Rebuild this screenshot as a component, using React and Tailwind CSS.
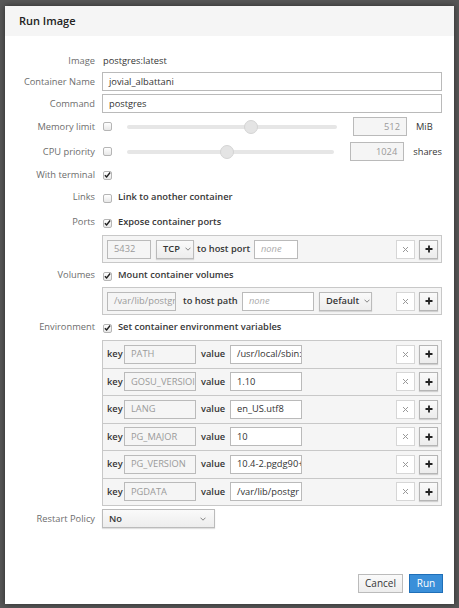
import React from 'react';

const Check = ({ checked }) => (
    <span className="w-[9px] h-[9px] shrink-0 border border-[#b5b5b5] rounded-[2px] bg-gradient-to-b from-white to-[#e8e8e8] flex items-center justify-center">
        {checked && (
            <svg width="8" height="8" viewBox="0 0 8 8">
                <path d="M1 4.2 L3 6.3 L7 1.2" stroke="#222" strokeWidth="1.6" fill="none" />
            </svg>
        )}
    </span>
);

const Row = ({ label, className = '', children }) => (
    <div className={`flex items-center ${className}`}>
        <div className="w-[90px] shrink-0 text-right text-[#6d6d6d] whitespace-nowrap">{label}</div>
        <div className="ml-[7px] w-[340px] flex items-center">{children}</div>
    </div>
);

const Field = ({ value, gray, italic, className = '' }) => (
    <div
        className={`h-[19px] shrink-0 border border-[#bababa] flex items-center px-[6px] overflow-hidden whitespace-nowrap ${
            gray ? 'bg-[#f5f5f5] text-[#9a9a9a]' : 'bg-white text-[#333]'
        } ${italic ? 'italic text-[#aaa]' : ''} ${className}`}
    >
        {value}
    </div>
);

const Chevron = () => (
    <svg className="shrink-0" width="6" height="4" viewBox="0 0 6 4">
        <path d="M0.5 0.7 L3 3.2 L5.5 0.7" stroke="#777" strokeWidth="0.9" fill="none" />
    </svg>
);

const Select = ({ value, className = '' }) => (
    <div className={`h-[19px] shrink-0 border border-[#bbb] bg-gradient-to-b from-[#fafafa] to-[#ededed] shadow-[0_1px_1px_rgba(0,0,0,0.12)] flex items-center gap-[5px] px-[6px] font-semibold text-[#363636] ${className}`}>
        <span>{value}</span>
        <Chevron />
    </div>
);

const RowButtons = () => (
    <div className="ml-auto flex items-center gap-[4px] pr-[3px]">
        <div className="w-[19px] h-[19px] border border-[#d6d6d6] bg-white flex items-center justify-center">
            <svg width="7" height="7" viewBox="0 0 7 7">
                <path d="M1 1 L6 6 M6 1 L1 6" stroke="#999" strokeWidth="1" />
            </svg>
        </div>
        <div className="w-[19px] h-[19px] border border-[#b5b5b5] bg-gradient-to-b from-[#fafafa] to-[#ececec] shadow-[0_1px_1px_rgba(0,0,0,0.15)] flex items-center justify-center">
            <svg width="8" height="8" viewBox="0 0 8 8">
                <path d="M4 0.5 V7.5 M0.5 4 H7.5" stroke="#222" strokeWidth="1.8" />
            </svg>
        </div>
    </div>
);

const Slider = ({ pos }) => (
    <div className="relative ml-[15px] w-[210px] h-[14px] flex items-center">
        <div className="w-full h-[4px] bg-[#e6e6e6] rounded-full" />
        <div
            className="absolute top-0 w-[14px] h-[14px] rounded-full bg-[#e4e4e4] border border-[#d4d4d4]"
            style={{ left: pos - 7 }}
        />
    </div>
);

const envVars = [
    ['PATH', '/usr/local/sbin:'],
    ['GOSU_VERSIOI', '1.10'],
    ['LANG', 'en_US.utf8'],
    ['PG_MAJOR', '10'],
    ['PG_VERSION', '10.4-2.pgdg90+'],
    ['PGDATA', '/var/lib/postgr'],
];

export default function App() {
    return (
        <div className="min-h-[608px] bg-[#575757] pt-[6px] pl-[5px] text-[9.3px] text-[#363636]" style={{ fontFamily: '"Open Sans", "Noto Sans", sans-serif' }}>
            <div className="w-[449px] h-[598px] bg-white shadow-[0_0_6px_rgba(0,0,0,0.5)] flex flex-col">
                {/* Header */}
                <div className="h-[30px] bg-[#f5f5f5] px-[14px] flex items-center text-[11px] font-semibold text-[#222]">
                    Run Image
                </div>

                <div className="flex flex-col">
                    <Row label="Image" className="mt-[15px] h-[20px]">
                        <span className="ml-[1px]">postgres:latest</span>
                    </Row>
                    <Row label="Container Name" className="mt-[1px] h-[19px]">
                        <Field value="jovial_albattani" className="w-full" />
                    </Row>
                    <Row label="Command" className="mt-[3px] h-[19px]">
                        <Field value="postgres" className="w-full" />
                    </Row>
                    <Row label="Memory limit" className="mt-[4px] h-[19px]">
                        <span className="ml-[1px]"><Check /></span>
                        <Slider pos={124} />
                        <Field value="512" gray className="ml-[16px] w-[54px] justify-end" />
                        <span className="ml-[9px]">MiB</span>
                    </Row>
                    <Row label="CPU priority" className="mt-[6px] h-[19px]">
                        <span className="ml-[1px]"><Check /></span>
                        <Slider pos={100} />
                        <Field value="1024" gray className="ml-[16px] w-[54px] justify-end" />
                        <span className="ml-[9px]">shares</span>
                    </Row>
                    <Row label="With terminal" className="mt-[5px] h-[18px]">
                        <span className="ml-[1px]"><Check checked /></span>
                    </Row>
                    <Row label="Links" className="mt-[4px] h-[18px]">
                        <span className="ml-[1px] mt-[2px]"><Check /></span>
                        <span className="ml-[6px] font-semibold">Link to another container</span>
                    </Row>
                    <Row label="Ports" className="mt-[7px] h-[18px]">
                        <span className="ml-[1px] mt-[2px]"><Check checked /></span>
                        <span className="ml-[6px] font-semibold">Expose container ports</span>
                    </Row>
                    <Row className="mt-[4px] h-[28px]">
                        <div className="w-full h-[28px] border border-[#c8c8c8] bg-[#f5f5f5] flex items-center pl-[4px]">
                            <Field value="5432" gray className="w-[44px]" />
                            <Select value="TCP" className="ml-[5px] w-[38px]" />
                            <span className="ml-[3px] w-[57px] font-semibold whitespace-nowrap">to host port</span>
                            <Field value="none" italic className="w-[44px]" />
                            <RowButtons />
                        </div>
                    </Row>
                    <Row label="Volumes" className="mt-[3px] h-[18px]">
                        <span className="ml-[1px] mt-[2px]"><Check checked /></span>
                        <span className="ml-[6px] font-semibold">Mount container volumes</span>
                    </Row>
                    <Row className="mt-[3px] h-[28px]">
                        <div className="w-full h-[28px] border border-[#c8c8c8] bg-[#f5f5f5] flex items-center pl-[4px]">
                            <Field value="/var/lib/postgres" gray className="w-[69px]" />
                            <span className="ml-[7px] w-[59px] font-semibold whitespace-nowrap">to host path</span>
                            <Field value="none" italic className="w-[72px]" />
                            <Select value="Default" className="ml-[5px] w-[53px]" />
                            <RowButtons />
                        </div>
                    </Row>
                    <Row label="Environment" className="mt-[3px] h-[18px]">
                        <span className="ml-[1px] mt-[2px]"><Check checked /></span>
                        <span className="ml-[6px] font-semibold">Set container environment variables</span>
                    </Row>
                    <Row className="mt-[4px]">
                        <div className="w-full border-t border-[#c8c8c8] flex flex-col">
                            {envVars.map(([k, v]) => (
                                <div key={k} className="h-[27.5px] border border-t-0 border-[#c8c8c8] bg-[#f5f5f5] flex items-center pl-[4px]">
                                    <span className="w-[17px] font-semibold">key</span>
                                    <Field value={k} gray className="w-[72px]" />
                                    <span className="ml-[5px] w-[29px] font-semibold">value</span>
                                    <Field value={v} className="w-[72px]" />
                                    <RowButtons />
                                </div>
                            ))}
                        </div>
                    </Row>
                    <Row label="Restart Policy" className="mt-[3px] h-[19px]">
                        <div className="w-[113px] h-[19px] border border-[#bbb] bg-gradient-to-b from-[#fafafa] to-[#ededed] shadow-[0_1px_1px_rgba(0,0,0,0.12)] flex items-center justify-between pl-[6px] pr-[8px] font-semibold">
                            <span>No</span>
                            <Chevron />
                        </div>
                    </Row>
                </div>

                {/* Footer */}
                <div className="mt-auto mb-[11px] flex justify-end gap-[6px] pr-[11px]">
                    <button className="h-[19px] w-[45px] border border-[#bbb] bg-gradient-to-b from-[#fafafa] to-[#ededed] text-[#363636] text-[10px]">
                        Cancel
                    </button>
                    <button className="h-[19px] w-[34px] border border-[#1f6fb8] bg-[#3a8fd9] text-white text-[10px]">
                        Run
                    </button>
                </div>
            </div>
        </div>
    );
}
